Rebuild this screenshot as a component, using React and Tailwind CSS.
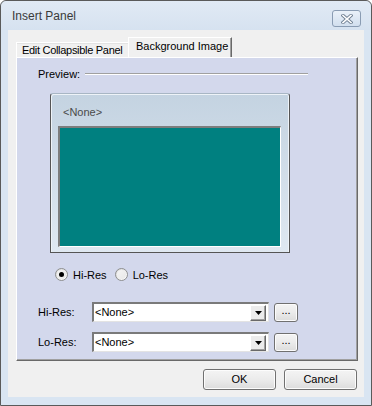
import React from "react";

const uiFont = { fontFamily: '"Liberation Sans", Arial, sans-serif' };

function WinButton({ label, className }) {
  return (
    <button
      className={
        "flex items-center justify-center rounded-[3px] border border-[#707070] bg-gradient-to-b from-[#f4f4f4] via-[#ebebeb] to-[#dcdcdc] text-[11px] text-black shadow-[inset_0_0_0_1px_#fcfcfc] " +
        className
      }
    >
      {label}
    </button>
  );
}

function Radio({ checked, label }) {
  return (
    <div className="flex items-center">
      <div className="w-[13px] h-[13px] rounded-full border border-[#8e8f8f] bg-gradient-to-br from-[#d9d9d9] to-white flex items-center justify-center">
        <div className="w-[9px] h-[9px] rounded-full bg-gradient-to-br from-[#f5f5f5] to-[#e8e8e8] flex items-center justify-center">
          {checked && <div className="w-[5px] h-[5px] rounded-full bg-black" />}
        </div>
      </div>
      <span className="ml-[5px] text-[11px] text-black">{label}</span>
    </div>
  );
}

function ComboRow({ label, className }) {
  return (
    <div className={"flex items-center pl-[21px] " + className}>
      <span className="w-[54px] text-[11px] text-black">{label}</span>
      <div className="w-[177px] h-[20px] flex items-center bg-white border-t-2 border-l-2 border-[#7a7a7a] border-b border-r border-b-[#e3e3e3] border-r-[#e3e3e3]">
        <span className="flex-1 pl-[1px] text-[11px] text-black">&lt;None&gt;</span>
        <div className="w-[16px] h-[16px] mr-[2px] flex items-center justify-center bg-[#ececec] border border-t-white border-l-white border-b-[#696969] border-r-[#696969] shadow-[inset_-1px_-1px_0_#a0a0a0]">
          <svg width="7" height="4" viewBox="0 0 7 4">
            <path d="M0 0h7L3.5 4z" fill="#000" />
          </svg>
        </div>
      </div>
      <WinButton label="..." className="ml-[5px] w-[24px] h-[19px] pb-[3px]" />
    </div>
  );
}

export default function App() {
  return (
    <div
      className="w-[372px] h-[406px] flex flex-col rounded-t-[6px] border border-[#5a5a5a] bg-[#d9e5f2]"
      style={uiFont}
    >
      {/* title bar */}
      <div className="h-[29px] flex justify-between pl-[11px] pr-[10px] rounded-t-[6px] bg-gradient-to-b from-[#e1eaf5] to-[#d6e2f0]">
        <span className="self-center mt-[1px] text-[12px] text-[#3a3a3a]">Insert Panel</span>
        <div className="mt-[9px] w-[29px] h-[17px] rounded-[3px] border border-[#8a9cb3] bg-gradient-to-b from-[#eaf1f9] to-[#d2dfee] flex items-center justify-center">
          <svg width="12" height="10" viewBox="0 0 12 10">
            <path d="M2 1.5l8 7M10 1.5l-8 7" stroke="#6f7f92" strokeWidth="3.4" strokeLinecap="square" />
            <path d="M2 1.5l8 7M10 1.5l-8 7" stroke="#ffffff" strokeWidth="1.6" strokeLinecap="square" />
          </svg>
        </div>
      </div>

      {/* client area */}
      <div className="flex-1 mx-[7px] mb-[8px] bg-[#f0f0f0] flex flex-col">
        {/* tabs */}
        <div className="mt-[7px] ml-[8px] h-[20px] flex items-end">
          <div className="w-[112px] h-[15px] pl-[5px] flex items-center whitespace-nowrap overflow-hidden tracking-[-0.3px] border-t border-l border-white shadow-[inset_0_1px_0_#e3e3e3] text-[11px] text-black">
            Edit Collapsible Panel
          </div>
          <div className="w-[104px] h-[20px] pl-[7px] pb-[2px] flex items-center whitespace-nowrap border-t border-l border-white border-r border-r-[#696969] shadow-[inset_-1px_0_0_#a0a0a0] text-[11px] text-black">
            Background Image
          </div>
        </div>

        {/* tab panel */}
        <div className="ml-[8px] w-[342px] h-[304px] bg-[#d3d8ec] border-t border-l border-white border-r border-b border-r-[#696969] border-b-[#696969] shadow-[inset_-1px_-1px_0_#a0a0a0] flex flex-col">
          <div className="mt-[8px] pl-[21px] flex items-center">
            <span className="text-[11px] text-black">Preview:</span>
            <div className="ml-[5px] w-[223px] h-[2px] border-t border-t-[#a0a0a0] border-b border-b-white" />
          </div>

          <div className="mt-[10px] ml-[33px] w-[240px] h-[160px] rounded-t-[3px] border border-[#555] border-t-[#a8b6c4] bg-gradient-to-b from-[#c4d3e1] to-[#dfe8f1] shadow-[inset_1px_1px_0_#eef3f8,inset_-1px_0_0_#eef3f8] flex flex-col">
            <span className="mt-[10px] pl-[12px] text-[11px] text-[#4a4a4a]">&lt;None&gt;</span>
            <div className="mt-[6px] ml-[7px] w-[223px] h-[121px] bg-[#008080] border-t-2 border-l-2 border-[#7d7d7d] border-b border-r border-b-white border-r-white" />
          </div>

          <div className="mt-[14px] ml-[38px] flex items-center gap-[8px]">
            <Radio checked label="Hi-Res" />
            <Radio label="Lo-Res" />
          </div>

          <ComboRow label="Hi-Res:" className="mt-[19px]" />
          <ComboRow label="Lo-Res:" className="mt-[10px]" />
        </div>

        {/* dialog buttons */}
        <div className="mt-[8px] pr-[7px] flex justify-end gap-[8px]">
          <WinButton label="OK" className="w-[73px] h-[21px]" />
          <WinButton label="Cancel" className="w-[73px] h-[21px]" />
        </div>
      </div>
    </div>
  );
}
